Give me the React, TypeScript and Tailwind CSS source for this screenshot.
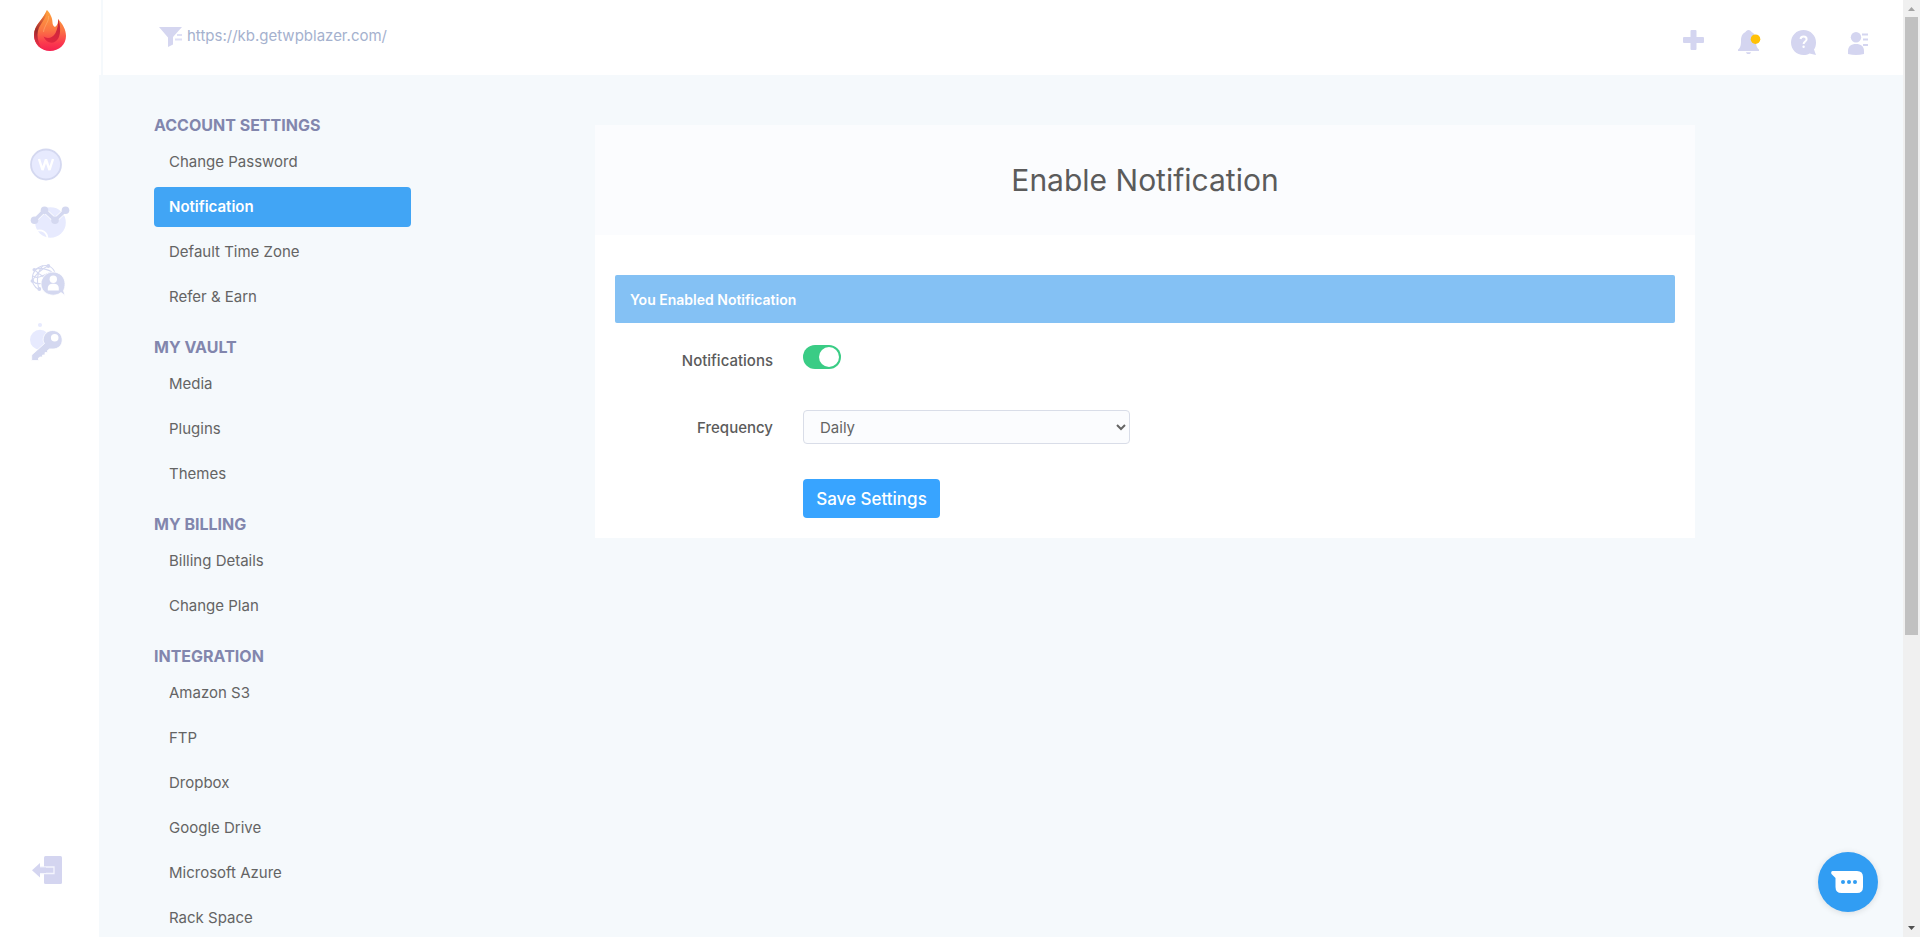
import type { ReactNode } from "react";

type Section = { title: string; items: string[] };

const sections: Section[] = [
  { title: "ACCOUNT SETTINGS", items: ["Change Password", "Notification", "Default Time Zone", "Refer & Earn"] },
  { title: "MY VAULT", items: ["Media", "Plugins", "Themes"] },
  { title: "MY BILLING", items: ["Billing Details", "Change Plan"] },
  { title: "INTEGRATION", items: ["Amazon S3", "FTP", "Dropbox", "Google Drive", "Microsoft Azure", "Rack Space"] },
];

const activeItem = "Notification";

function FlameLogo() {
  return (
    <svg width="32" height="41" viewBox="0 0 32 41" aria-hidden="true">
      <defs>
        <linearGradient id="flame" x1="0.5" y1="0" x2="0.5" y2="1">
          <stop offset="0" stopColor="#ffa63c" />
          <stop offset="0.5" stopColor="#fb7444" />
          <stop offset="0.8" stopColor="#fb3a4e" />
          <stop offset="1" stopColor="#f52150" />
        </linearGradient>
        <linearGradient id="flameSide" x1="0.6" y1="0" x2="0.4" y2="1">
          <stop offset="0" stopColor="#f9923c" />
          <stop offset="0.35" stopColor="#c94a34" />
          <stop offset="0.6" stopColor="#9c2a2c" />
          <stop offset="1" stopColor="#f7304c" />
        </linearGradient>
        <linearGradient id="flameCurl" x1="0.8" y1="0" x2="0.4" y2="1">
          <stop offset="0" stopColor="#c2283a" />
          <stop offset="1" stopColor="#e2263f" />
        </linearGradient>
      </defs>
      <path d="M13 0C16 3 18.500 8 18.500 12.500C18.500 14.500 19.500 16.500 21 17C23.500 15.500 24.500 12 24 9C29 14 32 20 32 26C32 34.500 25 41 16 41C7 41 0 34 0 25C0 15 9 10 13 0Z" fill="url(#flame)" />
      <path d="M13 0C13 10 3.500 14 3.500 25C3.500 30 5 34 8 38.500C3 36 0 31 0 25C0 15 9 10 13 0Z" fill="url(#flameSide)" />
      <path d="M24 9C26.500 14 27 23 24.500 28C21 34.500 13 34.500 9.500 26.500C13 29 18.500 28.500 21.500 23C23.500 19 24.500 14 24 9Z" fill="url(#flameCurl)" />
      <path d="M14.500 6C15.500 11 10 16 9.500 22" stroke="#ffc48c" strokeWidth="0.600" fill="none" opacity="0.700" />
    </svg>
  );
}

function FilterIcon() {
  return (
    <svg width="23" height="20" viewBox="0 0 23 20" aria-hidden="true">
      <path d="M0 0H23L14 10V17.500L9 20V10.500Z" fill="#d5d6f0" />
      <path d="M18 8H23M16 12.500H23" stroke="#dfe0f6" strokeWidth="2.200" />
    </svg>
  );
}

function WordPressIcon() {
  return (
    <svg width="32" height="33" viewBox="0 0 32 33" aria-hidden="true">
      <circle cx="16" cy="16.500" r="15" fill="#e7eafe" stroke="#d4d8f0" strokeWidth="1.800" />
      <path d="M9 11L12.500 22L16 11.500L19.500 22L23 11" fill="none" stroke="#fff" strokeWidth="2.400" strokeLinejoin="bevel" />
    </svg>
  );
}

function AnalyticsIcon() {
  return (
    <svg width="40" height="33" viewBox="0 0 40 33" aria-hidden="true">
      <circle cx="20.500" cy="16.500" r="15.300" fill="#e7eafe" />
      <path d="M5 25.500C11.500 22.500 17.500 26 17.500 33" fill="none" stroke="#fff" strokeWidth="1.800" />
      <path d="M4.500 14.300L14.500 4.200L25 14.300L35.500 4.200" fill="none" stroke="#fff" strokeWidth="4.800" />
      <path d="M4.500 14.300L14.500 4.200L25 14.300L35.500 4.200" fill="none" stroke="#d4d8f0" strokeWidth="3.400" />
      <g fill="#d4d8f0">
        <circle cx="4.500" cy="14.300" r="3.800" />
        <circle cx="14.500" cy="4.200" r="3.800" />
        <circle cx="25" cy="14.300" r="3.800" />
        <circle cx="35.500" cy="4.200" r="3.800" />
      </g>
    </svg>
  );
}

function ClientsIcon() {
  return (
    <svg width="35" height="33" viewBox="0 0 35 33" aria-hidden="true">
      <g fill="none" stroke="#d4d8f0" strokeWidth="1.100">
        <path d="M9 25.500C4 23 1.500 18 2.500 12C4 5 11 0.500 18 1.800C21.500 3 24 5.500 25 9" />
        <path d="M4.300 5.700C10 3 15 4 22 8M4.300 5.700C9 10 12 12 14 13M2.300 17C6 9 12 5 18.300 1.800M2.300 17C5 19.500 8 20 11 19.500M9.300 25C6 18 7 8 13 1.500M3 12C8 16 14 10 22 8" />
      </g>
      <g fill="#d4d8f0">
        <circle cx="4.300" cy="5.700" r="1.800" />
        <circle cx="18.300" cy="2" r="1.900" />
        <circle cx="2.300" cy="17" r="1.800" />
        <circle cx="9.300" cy="25" r="1.900" />
      </g>
      <path d="M35 31.500L31 28.500C28 31 24 31.500 21 31C15 30 11 25.500 11 20C11 13.500 16.500 8 23 8C29.500 8 35 13 35 19.500C35 22.500 34.500 25 33.500 26.500Z" fill="#d4d8f0" stroke="#fff" strokeWidth="0.800" />
      <circle cx="23.300" cy="15.200" r="3.700" fill="#fff" />
      <path d="M17.800 26.500V24.500C17.800 21 20 19.800 23.300 19.800C26.600 19.800 28.800 21 28.800 24.500V26.500Z" fill="#fff" />
    </svg>
  );
}

function KeyIcon() {
  return (
    <svg width="33" height="39" viewBox="0 0 33 39" aria-hidden="true">
      <circle cx="10" cy="3" r="2.100" fill="#e7eafe" />
      <circle cx="10" cy="17.700" r="10" fill="#e7eafe" />
      <path d="M22.500 8.500C28 8.500 32.200 12.500 32.200 18C32.200 23.500 28 27 23 27C21.500 27 20.500 26.800 19.500 27L17.500 28.500V30.500H15V33H12.500V35H10L8.500 36V38.500H1.700V33L14.500 21.500C13.500 20 13.200 19 13.200 17.500C13.200 12.500 17.500 8.500 22.500 8.500Z" fill="#d4d8f0" stroke="#fff" strokeWidth="0.800" />
      <circle cx="24.700" cy="15.700" r="3.800" fill="#fff" />
    </svg>
  );
}

function LogoutIcon() {
  return (
    <svg width="30" height="28" viewBox="0 0 30 28" aria-hidden="true">
      <rect x="12" y="0" width="18" height="28" rx="1.500" fill="#d4d5f0" />
      <path d="M8 11H22V17.500H8" fill="#d4d5f0" stroke="#f4f5fd" strokeWidth="1.300" />
      <path d="M0 14.300L8 7V11.500H14V17H8V21.500Z" fill="#d4d5f0" />
    </svg>
  );
}

function PlusIcon() {
  return (
    <svg width="21" height="20" viewBox="0 0 21 20" aria-hidden="true">
      <path d="M8.500 0H12.500Q13.500 0 13.500 1V7H20Q21 7 21 8V12Q21 13 20 13H13.500V19Q13.500 20 12.500 20H8.500Q7.500 20 7.500 19V13H1Q0 13 0 12V8Q0 7 1 7H7.500V1Q7.500 0 8.500 0Z" fill="#d4d5f0" />
    </svg>
  );
}

function BellIcon() {
  return (
    <svg width="23" height="24" viewBox="0 0 23 24" aria-hidden="true">
      <path d="M10.500 0C12 0 13 1 13.500 2C17 3.500 18 7 18 11C18 16 19 18 21 19.500V21H0V19.500C2 18 3 16 3 11C3 7 4 3.500 7.500 2C8 1 9 0 10.500 0Z" fill="#d4d5f0" />
      <path d="M8 22.200H13C12.700 23.500 11.700 24 10.500 24C9.300 24 8.300 23.500 8 22.200Z" fill="#d4d5f0" />
      <circle cx="17.500" cy="9.200" r="4.800" fill="#ffc107" />
    </svg>
  );
}

function HelpIcon() {
  return (
    <svg width="25" height="25" viewBox="0 0 25 25" aria-hidden="true">
      <path d="M12.500 0C19.500 0 25 5.500 25 12.500C25 15 24.500 17.500 23 19.500L25 25L18.500 23.500C17 24.500 14.500 25 12.500 25C5.500 25 0 19.500 0 12.500C0 5.500 5.500 0 12.500 0Z" fill="#d4d5f0" />
      <path d="M9.500 9C9.800 7.200 11 6.500 12.600 6.500C14.500 6.500 15.600 7.600 15.600 9.200C15.600 11.500 12.600 11.500 12.600 14" fill="none" stroke="#fff" strokeWidth="2" />
      <circle cx="12.600" cy="16.800" r="1.200" fill="#fff" />
    </svg>
  );
}

function UserIcon() {
  return (
    <svg width="20" height="23" viewBox="0 0 20 23" aria-hidden="true">
      <circle cx="8" cy="5.200" r="5.200" fill="#d4d5f0" />
      <path d="M0 22V19C0 14.500 3 12 8 12C13 12 16 14.500 16 19V22Q8 24 0 22Z" fill="#d4d5f0" />
      <path d="M14 2.500H20M15 7.500H20M15 13H20" stroke="#d4d5f0" strokeWidth="2" />
    </svg>
  );
}

function IconLink({ label, children, className = "" }: { label: string; children: ReactNode; className?: string }) {
  return (
    <a href="#" aria-label={label} className={`block ${className}`}>
      {children}
    </a>
  );
}

function Rail() {
  return (
    <aside className="flex w-[99px] shrink-0 flex-col items-start bg-white pb-[53px] pt-[10px]">
      <IconLink label="Home" className="ml-[34px]"><FlameLogo /></IconLink>
      <nav aria-label="Main" className="ml-[30px] mt-[97px] flex flex-col items-start gap-[25px]">
        <IconLink label="Sites"><WordPressIcon /></IconLink>
        <IconLink label="Analytics"><AnalyticsIcon /></IconLink>
        <IconLink label="Clients"><ClientsIcon /></IconLink>
        <IconLink label="Vault"><KeyIcon /></IconLink>
      </nav>
      <IconLink label="Log out" className="ml-[32px] mt-auto"><LogoutIcon /></IconLink>
    </aside>
  );
}

function TopBar() {
  return (
    <header className="flex h-[75px] shrink-0 items-start justify-between bg-white">
      <div className="ml-[2px] flex h-full items-start border-l-2 border-[#f5f9fc] pl-[56px] pt-[24px]">
        <a href="#" className="flex items-start gap-[5px] text-[15px] leading-6 text-[#a5b1ce]">
          <span className="pt-[3px]"><FilterIcon /></span>
          https://kb.getwpblazer.com/
        </a>
      </div>
      <div className="flex items-start gap-[30px] pr-[35px] pt-[30px]">
        <button type="button" aria-label="Add" className="mr-1"><PlusIcon /></button>
        <button type="button" aria-label="Alerts"><BellIcon /></button>
        <button type="button" aria-label="Help"><HelpIcon /></button>
        <button type="button" aria-label="Profile" className="ml-0.5 pt-0.5"><UserIcon /></button>
      </div>
    </header>
  );
}

function SettingsNav() {
  return (
    <nav aria-label="Settings" className="flex w-[257px] shrink-0 flex-col gap-[18px]">
      {sections.map((section) => (
        <section key={section.title}>
          <h2 className="mb-[5px] text-base font-bold leading-6 text-[#8286ad]">{section.title}</h2>
          <ul className="flex flex-col gap-[5px]">
            {section.items.map((item) => (
              <li key={item}>
                <a
                  href="#"
                  className={
                    item === activeItem
                      ? "flex h-10 items-center rounded bg-[#41a5f5] px-[15px] text-[15px] font-semibold text-white"
                      : "flex h-10 items-center rounded px-[15px] text-[15px] text-[#646464]"
                  }
                >
                  {item}
                </a>
              </li>
            ))}
          </ul>
        </section>
      ))}
    </nav>
  );
}

function NotificationCard() {
  return (
    <section className="ml-[184px] mr-[208px] mt-3 min-w-0 flex-1 self-start bg-white">
      <h1 className="flex h-[110px] items-center justify-center bg-[#fbfcfe] text-[30px] text-[#5b5b5b]">Enable Notification</h1>
      <form className="px-5 pb-5 pt-10" onSubmit={(event) => event.preventDefault()}>
        <p role="status" className="flex h-12 items-center rounded-xs bg-[#84c1f4] px-[15px] text-[14px] font-semibold text-white">
          You Enabled Notification
        </p>
        <div className="mt-[22px] flex gap-[30px]">
          <label htmlFor="notifications" className="w-[158px] pt-1 text-right text-[15px] font-medium leading-6 text-[#5b5b5b]">Notifications</label>
          <input
            id="notifications"
            type="checkbox"
            role="switch"
            defaultChecked
            className="flex h-6 w-[38px] appearance-none items-center rounded-full bg-gray-300 p-0.5 before:block before:size-5 before:rounded-full before:bg-white checked:justify-end checked:bg-[#3acc85]"
          />
        </div>
        <div className="mt-[37px] flex gap-[30px]">
          <label htmlFor="frequency" className="w-[158px] pt-1.5 text-right text-[15px] font-medium leading-6 text-[#5b5b5b]">Frequency</label>
          <select id="frequency" defaultValue="Daily" className="h-[34px] w-[327px] rounded border border-[#d9dde8] bg-[#fbfcfe] pl-3 text-[15px] text-[#646464]">
            <option>Daily</option>
            <option>Weekly</option>
            <option>Monthly</option>
          </select>
        </div>
        <button type="submit" className="ml-[188px] mt-[35px] block h-[39px] w-[137px] rounded bg-[#38a4ff] text-[17px] font-medium leading-6 text-white">
          Save Settings
        </button>
      </form>
    </section>
  );
}

function ScrollTrack() {
  return (
    <div aria-hidden="true" className="flex w-[17px] shrink-0 flex-col items-center bg-[#f0f0f0]">
      <svg width="17" height="17" viewBox="0 0 17 17"><path d="M5 11L8.500 7L12 11Z" fill="#a3a3a3" /></svg>
      <div className="h-[66%] w-[13px] bg-[#c1c1c1]" />
      <svg className="mt-auto" width="17" height="17" viewBox="0 0 17 17"><path d="M5 6L8.500 10L12 6Z" fill="#505050" /></svg>
    </div>
  );
}

export default function App() {
  return (
    <div className="flex h-screen overflow-hidden bg-[#f5f9fc] font-['Inter','Open_Sans',sans-serif]">
      <Rail />
      <div className="relative flex min-w-0 flex-1 flex-col">
        <TopBar />
        <main className="flex min-h-0 flex-1 overflow-hidden pl-[55px] pt-[38px]">
          <SettingsNav />
          <NotificationCard />
        </main>
        <button type="button" aria-label="Open chat" className="absolute bottom-[25px] right-[25px] flex size-[60px] items-center justify-center rounded-full bg-[#319df3] shadow-[0_1px_6px_rgba(0,0,0,0.12)]">
          <svg width="34" height="22" viewBox="0 0 34 22" aria-hidden="true">
            <path d="M1.500 0H26Q32 0 32 6V16Q32 22 26 22H10.500Q4.500 22 4.500 16V7L0.500 3Q-0.500 0.500 1.500 0Z" fill="#fff" />
            <g fill="#319df3"><circle cx="12" cy="11" r="2" /><circle cx="18" cy="11" r="2" /><circle cx="24" cy="11" r="2" /></g>
          </svg>
        </button>
      </div>
      <ScrollTrack />
    </div>
  );
}
